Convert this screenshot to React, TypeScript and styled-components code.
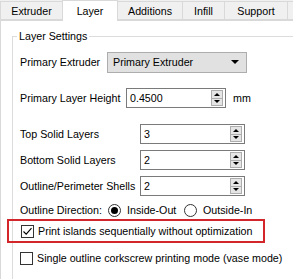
import React from "react";
import styled, { createGlobalStyle } from "styled-components";

const GlobalStyle = createGlobalStyle`
  body {
    margin: 0;
    background: #f0f0f0;
    font-family: "Liberation Sans", Arial, sans-serif;
    font-size: 10.7px;
    color: #000;
  }
`;

const Window = styled.div`
  width: 293px;
  height: 279px;
  overflow: hidden;
  background: #f0f0f0;
`;

const TabBar = styled.div`
  display: flex;
  align-items: flex-end;
  height: 20px;
  position: relative;
  z-index: 1;
`;

const Tab = styled.div<{ $active?: boolean; $w: number }>`
  box-sizing: border-box;
  flex: none;
  width: ${(p) => p.$w}px;
  height: ${(p) => (p.$active ? 21 : 19)}px;
  margin-bottom: ${(p) => (p.$active ? -1 : 0)}px;
  margin-left: -1px;
  background: ${(p) => (p.$active ? "#fff" : "#f0f0f0")};
  border: 1px solid #d9d9d9;
  border-bottom: ${(p) => (p.$active ? "none" : "1px solid #d9d9d9")};
  display: flex;
  align-items: center;
  justify-content: center;
  line-height: 16px;
  &:first-child {
    margin-left: 0;
  }
`;

const Panel = styled.div`
  box-sizing: border-box;
  height: 300px;
  width: 320px;
  background: #fff;
  border: 1px solid #d9d9d9;
  padding: 7px 0 0 11px;
`;

const Group = styled.fieldset`
  margin: 0;
  width: 320px;
  height: 300px;
  box-sizing: border-box;
  border: 1px solid #dcdcdc;
  padding: 0 0 0 7px;
  min-width: 0;
`;

const Legend = styled.legend`
  padding: 0 2px;
  margin-left: -3px;
  line-height: 16px;
`;

const Row = styled.div<{ $top: number; $h?: number }>`
  display: flex;
  align-items: center;
  height: ${(p) => p.$h ?? 20}px;
  margin-top: ${(p) => p.$top}px;
`;

const Label = styled.span<{ $w: number }>`
  flex: none;
  width: ${(p) => p.$w}px;
  white-space: nowrap;
`;

const Combo = styled.div`
  box-sizing: border-box;
  width: 140px;
  height: 21px;
  border: 1px solid #adadad;
  background: #e1e1e1;
  display: flex;
  align-items: center;
  justify-content: space-between;
  padding: 0 7px 0 5px;
`;

const ComboArrow = styled.span`
  width: 0;
  height: 0;
  border-left: 4px solid transparent;
  border-right: 4px solid transparent;
  border-top: 4px solid #000;
`;

const SpinBox = styled.div<{ $w: number }>`
  box-sizing: border-box;
  width: ${(p) => p.$w}px;
  height: 20px;
  border: 1px solid #7a7a7a;
  background: #fff;
  display: flex;
  align-items: center;
  justify-content: space-between;
  padding: 0 2px 0 3px;
`;

const SpinButtons = styled.div`
  box-sizing: border-box;
  width: 12px;
  height: 16px;
  border: 1px solid #adadad;
  background: #e5e5e5;
  display: flex;
  flex-direction: column;
`;

const SpinHalf = styled.div<{ $down?: boolean }>`
  flex: 1;
  display: flex;
  align-items: center;
  justify-content: center;
  border-top: ${(p) => (p.$down ? "1px solid #adadad" : "none")};
  &::after {
    content: "";
    width: 0;
    height: 0;
    border-left: 3px solid transparent;
    border-right: 3px solid transparent;
    ${(p) =>
      p.$down ? "border-top: 3px solid #000;" : "border-bottom: 3px solid #000;"}
  }
`;

const Unit = styled.span`
  margin-left: 7px;
`;

const Radio = styled.span<{ $checked?: boolean }>`
  box-sizing: border-box;
  flex: none;
  width: 13px;
  height: 13px;
  border-radius: 50%;
  border: 1px solid #333;
  background: #fff;
  display: flex;
  align-items: center;
  justify-content: center;
  margin-right: 6px;
  &::after {
    content: "";
    width: 7px;
    height: 7px;
    border-radius: 50%;
    background: ${(p) => (p.$checked ? "#000" : "transparent")};
  }
`;

const RadioText = styled.span<{ $w?: number }>`
  flex: none;
  width: ${(p) => (p.$w ? `${p.$w}px` : "auto")};
  white-space: nowrap;
`;

const Highlight = styled.div`
  box-sizing: border-box;
  width: 258px;
  height: 24px;
  margin: 1px 0 0 -13px;
  border: 2px solid #d3262b;
  display: flex;
  align-items: center;
  padding-left: 12px;
`;

const Check = styled.span`
  box-sizing: border-box;
  flex: none;
  width: 13px;
  height: 13px;
  border: 1px solid #333;
  background: #fff;
  margin-right: 4px;
  display: flex;
  align-items: center;
  justify-content: center;
`;

const CheckText = styled.span`
  white-space: nowrap;
`;

const Spin = ({ value, w }: { value: string; w: number }) => (
  <SpinBox $w={w}>
    <span>{value}</span>
    <SpinButtons>
      <SpinHalf />
      <SpinHalf $down />
    </SpinButtons>
  </SpinBox>
);

const CheckBox = ({ checked }: { checked?: boolean }) => (
  <Check>
    {checked && (
      <svg width="11" height="11" viewBox="0 0 11 11">
        <path d="M1.5 5.5 L4.2 8.2 L9.5 2.2" fill="none" stroke="#000" strokeWidth="1.1" />
      </svg>
    )}
  </Check>
);

export default function App() {
  return (
    <>
      <GlobalStyle />
      <Window>
        <TabBar>
          <Tab $w={63}>Extruder</Tab>
          <Tab $w={56} $active>
            Layer
          </Tab>
          <Tab $w={66}>Additions</Tab>
          <Tab $w={43}>Infill</Tab>
          <Tab $w={64}>Support</Tab>
          <Tab $w={40}></Tab>
        </TabBar>
        <Panel>
          <Group>
            <Legend>Layer Settings</Legend>
            <Row $top={8}>
              <Label $w={87}>Primary Extruder</Label>
              <Combo>
                <span>Primary Extruder</span>
                <ComboArrow />
              </Combo>
            </Row>
            <Row $top={16}>
              <Label $w={106}>Primary Layer Height</Label>
              <Spin value="0.4500" w={100} />
              <Unit>mm</Unit>
            </Row>
            <Row $top={16}>
              <Label $w={120}>Top Solid Layers</Label>
              <Spin value="3" w={105} />
            </Row>
            <Row $top={6}>
              <Label $w={120}>Bottom Solid Layers</Label>
              <Spin value="2" w={105} />
            </Row>
            <Row $top={6}>
              <Label $w={120}>Outline/Perimeter Shells</Label>
              <Spin value="2" w={105} />
            </Row>
            <Row $top={6} $h={16}>
              <Label $w={88}>Outline Direction:</Label>
              <Radio $checked />
              <RadioText $w={57}>Inside-Out</RadioText>
              <Radio />
              <RadioText>Outside-In</RadioText>
            </Row>
            <Highlight>
              <CheckBox checked />
              <CheckText>Print islands sequentially without optimization</CheckText>
            </Highlight>
            <Row $top={7} $h={16}>
              <CheckBox />
              <CheckText>Single outline corkscrew printing mode (vase mode)</CheckText>
            </Row>
          </Group>
        </Panel>
      </Window>
    </>
  );
}
